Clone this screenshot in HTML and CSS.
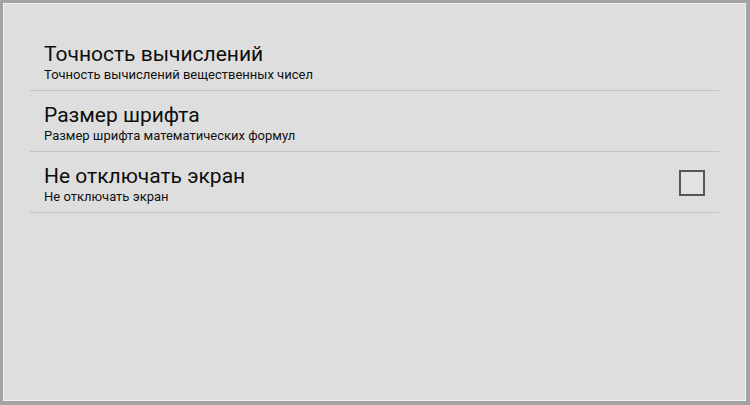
FILE: index.html
```html
<!DOCTYPE html>
<html lang="ru">
<head>
<meta charset="utf-8">
<link rel="stylesheet" href="styles.css">
</head>
<body>
<div class="frame">
  <div class="screen">
    <ul class="prefs">
      <li class="pref">
        <div class="pref-text">
          <div class="pref-title">Точность вычислений</div>
          <div class="pref-summary">Точность вычислений вещественных чисел</div>
        </div>
      </li>
      <li class="pref">
        <div class="pref-text">
          <div class="pref-title">Размер шрифта</div>
          <div class="pref-summary">Размер шрифта математических формул</div>
        </div>
      </li>
      <li class="pref">
        <div class="pref-text">
          <div class="pref-title">Не отключать экран</div>
          <div class="pref-summary">Не отключать экран</div>
        </div>
        <span class="checkbox"></span>
      </li>
    </ul>
  </div>
</div>
</body>
</html>
```

FILE: styles.css
```css
html, body {
  margin: 0;
  padding: 0;
}
body {
  width: 750px;
  height: 405px;
  overflow: hidden;
  font-family: Roboto, "Noto Sans", sans-serif;
}
.frame {
  box-sizing: border-box;
  width: 750px;
  height: 405px;
  background: #a3a3a3;
  padding: 3px 4px 4px 3px;
}
.screen {
  box-sizing: border-box;
  height: 100%;
  background: #dedede;
  border: 1px solid #f2f2f2;
  padding: 26px 26px 0 26px;
}
.prefs {
  list-style: none;
  margin: 0;
  padding: 0;
}
.pref {
  display: flex;
  align-items: center;
  height: 60px;
  border-bottom: 1px solid #c3c3c3;
  padding: 0 14px 0 14px;
}
.pref-text {
  flex: 1;
  padding-top: 3px;
}
.pref-title {
  font-size: 21px;
  line-height: 26px;
  color: #0d0d0d;
}
.pref-summary {
  font-size: 13px;
  line-height: 16px;
  color: #111;
  margin-top: 0;
}
.checkbox {
  box-sizing: border-box;
  width: 26px;
  height: 26px;
  border: 2px solid #575757;
  background: #e2e2e2;
  margin-top: 1px;
}
```
